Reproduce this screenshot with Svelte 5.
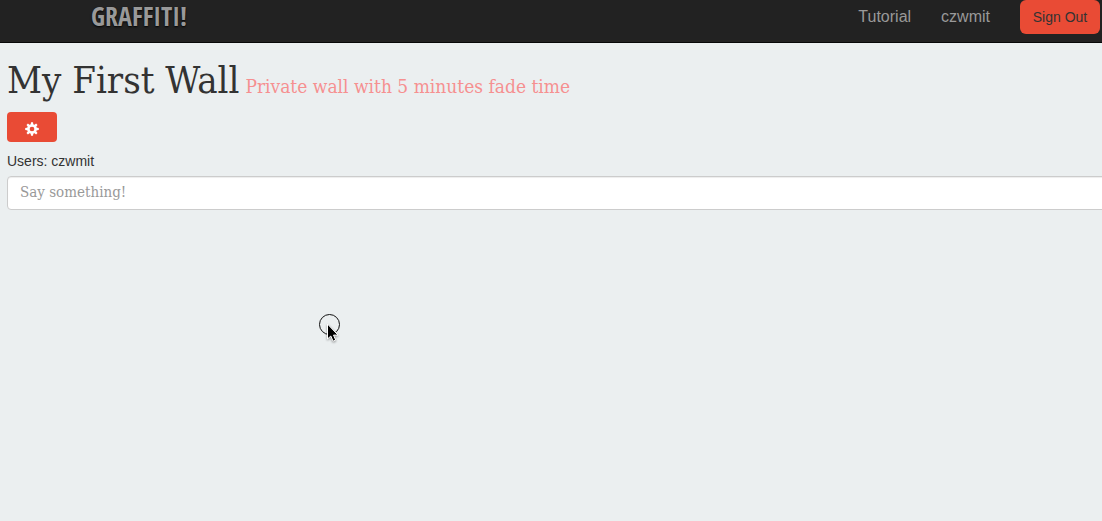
<script>
  let message = $state('');
  const wall = { title: 'My First Wall', detail: 'Private wall with 5 minutes fade time' };
  const user = 'czwmit';
  const teeth = [0, 45, 90, 135, 180, 225, 270, 315];
</script>

<div class="page">
  <header>
    <a class="brand" href="#home">GRAFFITI!</a>
    <nav>
      <a href="#tutorial">Tutorial</a>
      <a href="#user">{user}</a>
      <button class="sign-out" type="button">Sign Out</button>
    </nav>
  </header>

  <main>
    <h1>{wall.title} <small>{wall.detail}</small></h1>
    <button class="settings" type="button" aria-label="Settings">
      <svg width="14" height="14" viewBox="0 0 14 14" aria-hidden="true">
        <g fill="#fff">
          {#each teeth as angle}
            <path d="M5.6 3 6 .2h2L8.400 3z" transform="rotate({angle} 7 7)" />
          {/each}
        </g>
        <circle cx="7" cy="7" r="3.600" fill="none" stroke="#fff" stroke-width="2.500" />
      </svg>
    </button>
    <p>Users: {user}</p>
    <input type="text" aria-label="Message" placeholder="Say something!" bind:value={message} />
  </main>

  <svg class="pointer" width="26" height="32" viewBox="0 0 26 32" aria-hidden="true">
    <circle cx="11.500" cy="11.500" r="10" fill="none" stroke="#111" />
    <path class="arrow" d="M9.500 11v15l3.300-3 2.300 5.200 2.600-1.100-2.200-5h4.500z" fill="#000" stroke="#fff" />
  </svg>
</div>

<style>
  :global(body) {
    margin: 0;
    background: #ebeff0;
  }

  .page {
    position: relative;
    min-height: 100vh;
    overflow: hidden;
    color: #333;
    font: 14px/20px "Liberation Sans", Arial, sans-serif;
  }

  header {
    display: flex;
    align-items: flex-start;
    justify-content: space-between;
    height: 42px;
    padding: 0 2px 0 91px;
    border-bottom: 1px solid #080808;
    background: #222;
  }

  a {
    color: #999;
    text-decoration: none;
  }

  .brand {
    font: bold 26px/32px "Open Sans Condensed", "Liberation Sans Narrow", sans-serif;
    text-shadow: 0 1px 2px #000;
  }

  nav {
    display: flex;
    align-items: center;
    gap: 30px;
    height: 34px;
    font-size: 16px;
  }

  button {
    padding: 0;
    border: 0;
    background: #e94b35;
    color: #333;
    font: 14px/20px "Liberation Sans", Arial, sans-serif;
  }

  .sign-out {
    width: 80px;
    height: 34px;
    border-radius: 6px;
  }

  main {
    padding: 15px 0 0 7px;
  }

  h1 {
    display: flex;
    align-items: baseline;
    gap: 6px;
    height: 44px;
    margin: 0 0 10px;
    font: 500 38px/44px "DejaVu Serif Condensed", "DejaVu Serif", serif;
    white-space: nowrap;
  }

  small {
    color: #f69090;
    font-size: 19px;
  }

  .settings {
    display: flex;
    align-items: center;
    justify-content: center;
    width: 50px;
    height: 30px;
    padding-top: 4px;
    border-radius: 4px;
  }

  p {
    margin: 9px 0 5px;
  }

  input {
    display: block;
    box-sizing: border-box;
    width: calc(100% + 8px);
    height: 34px;
    padding: 5px 12px 7px;
    border: 1px solid #ccc;
    border-radius: 4px;
    background: #fff;
    box-shadow: inset 0 1px 1px #00000013;
    color: #555;
    font: 15px/20px "DejaVu Serif Condensed", "DejaVu Serif", serif;
  }

  input::placeholder {
    color: #999;
    opacity: 1;
  }

  .pointer {
    position: absolute;
    left: 318px;
    top: 313px;
  }

  .arrow {
    filter: drop-shadow(0 1px 1px #0006);
  }
</style>
